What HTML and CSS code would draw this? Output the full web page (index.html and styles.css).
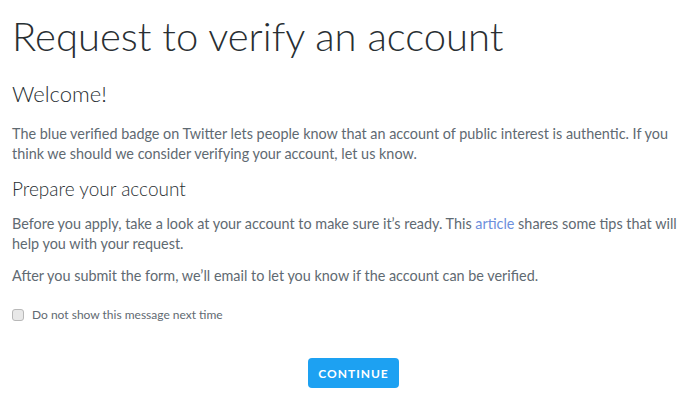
FILE: index.html
```html
<!DOCTYPE html>
<html>
<head>
<meta charset="utf-8">
<link rel="stylesheet" href="styles.css">
</head>
<body>
<div class="page">
  <h1 class="title">Request to verify an account</h1>
  <h2 class="sub">Welcome!</h2>
  <p class="text">The blue verified badge on Twitter lets people know that an account of public interest is authentic. If you think we should we consider verifying your account, let us know.</p>
  <h3 class="sub2">Prepare your account</h3>
  <p class="text">Before you apply, take a look at your account to make sure it’s ready. This <a class="link" href="#">article</a> shares some tips that will help you with your request.</p>
  <p class="text">After you submit the form, we’ll email to let you know if the account can be verified.</p>
  <label class="check"><input type="checkbox" class="box"><span>Do not show this message next time</span></label>
  <div class="actions"><button class="btn">CONTINUE</button></div>
</div>
</body>
</html>
```
FILE: styles.css
```css
html, body { margin: 0; padding: 0; background: #fff; }
body { font-family: "Lato", "Liberation Sans", sans-serif; color: #5f6a72; }
.page { padding: 12px 4px 0 12px; }
.title { font-weight: 300; font-size: 40px; line-height: 48px; color: #292f33; margin: 0 0 20px 0; }
.sub { font-weight: 300; font-size: 22px; line-height: 28px; color: #292f33; margin: 0 0 16px 0; }
.sub2 { font-weight: 300; font-size: 19px; line-height: 26px; color: #292f33; margin: 0 0 12px 0; }
.text { font-size: 14.4px; line-height: 20px; margin: 0 0 12px 0; }
.text + .sub2 { margin-top: 12px; }
.link { color: #6d8fdc; text-decoration: none; }
.check { display: flex; align-items: center; gap: 8px; font-size: 12px; margin-top: 21px; color: #5f6a72; }
.box { -webkit-appearance: none; appearance: none; margin: 0; width: 12px; height: 12px; border: 1px solid #b8b8b8; border-radius: 3px; background: #e8e8e8; box-sizing: border-box; }
.actions { display: flex; justify-content: center; margin-top: 36px; padding-left: 11px; }
.btn { background: #1da1f2; color: #fff; border: none; border-radius: 4px; font-family: "Lato", sans-serif; font-weight: 700; font-size: 12px; letter-spacing: 1px; padding: 0; width: 91px; height: 30px; }
```
